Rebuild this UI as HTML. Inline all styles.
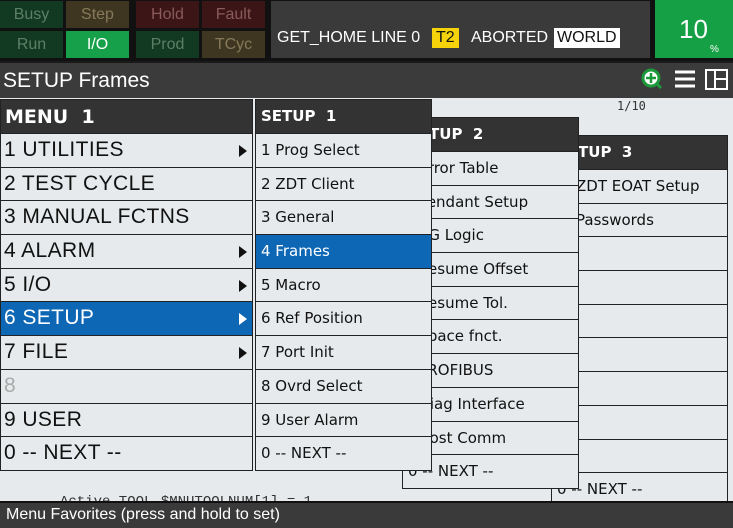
<!DOCTYPE html>
<html><head><meta charset="utf-8"><style>
*{margin:0;padding:0;box-sizing:border-box}
body{width:733px;height:528px;overflow:hidden;background:#e6eaec;position:relative;font-family:"Liberation Sans",sans-serif}
.abs{position:absolute}
.top{left:0;top:0;width:733px;height:61px;background:#111}
.c{position:absolute;width:63px;height:27px;font-size:16px;text-align:center;line-height:27px}
.title{left:0;top:61px;width:733px;height:37px;background:#3b3b3b;border-top:2px solid #1a1a1a;color:#fff;font-size:21px;line-height:36px;padding-left:3px}
.menu{position:absolute;background:#e6eaec}
.menu .h{height:35px;background:#333;color:#fff;font-weight:bold;font-family:"DejaVu Sans",sans-serif;padding-left:5px;border:1px solid #222}
.menu .i{height:33.7px;border:1px solid #222;border-top:none;position:relative;white-space:nowrap;overflow:hidden;color:#111}
.m1 .h{font-size:19px;line-height:35px;padding-left:4px}
.m1 .i{font-size:21px;line-height:32px;padding-left:3px;letter-spacing:0.4px}
.s .h{font-size:15px;line-height:33px}
.s .i{font-family:"DejaVu Sans",sans-serif;font-size:15px;line-height:32px;padding-left:5px}
.s2 .i{padding-left:1px}
.sel{background:#0d67b5;color:#fff!important}
.arr{position:absolute;right:5px;top:11px;width:0;height:0;border-left:8px solid #111;border-top:6px solid transparent;border-bottom:6px solid transparent}
.sel .arr{border-left-color:#fff}
</style></head><body>
<div class="abs top"></div>
<div class="c" style="left:0;top:1px;background:#123a22;color:#5d7f66">Busy</div>
<div class="c" style="left:66px;top:1px;background:#3e3620;color:#86795a">Step</div>
<div class="c" style="left:136px;top:1px;background:#3c1616;color:#8a5a5a">Hold</div>
<div class="c" style="left:202px;top:1px;background:#3c1616;color:#8a5a5a">Fault</div>
<div class="c" style="left:0;top:31px;background:#123a22;color:#5d7f66">Run</div>
<div class="c" style="left:66px;top:31px;background:#16a049;color:#fff">I/O</div>
<div class="c" style="left:136px;top:31px;background:#123a22;color:#5d7f66">Prod</div>
<div class="c" style="left:202px;top:31px;background:#3e3620;color:#86795a">TCyc</div>
<div class="abs" style="left:271px;top:1px;width:379px;height:57px;background:#3a3a3a;color:#fff;font-size:16px">
<span class="abs" style="left:6px;top:28px">GET_HOME LINE 0</span>
<span class="abs" style="left:161px;top:27px;background:#f5d20a;color:#111;padding:1px 4px">T2</span>
<span class="abs" style="left:200px;top:28px">ABORTED</span>
<span class="abs" style="left:283px;top:27px;background:#fff;color:#111;padding:1px 3px">WORLD</span>
</div>
<div class="abs" style="left:655px;top:0;width:78px;height:58px;background:#15a046;color:#fff">
<span class="abs" style="left:24px;top:14px;font-size:26px">10</span>
<span class="abs" style="left:55px;top:44px;font-size:10px">%</span>
</div>
<div class="abs title">SETUP Frames</div>
<svg class="abs" style="left:640px;top:67px" width="92" height="26">
<circle cx="11" cy="11" r="8" fill="#fff" stroke="#1c9a3a" stroke-width="3"/>
<path d="M11 6v10M6 11h10" stroke="#1c9a3a" stroke-width="2.5"/>
<path d="M16 16l5 5" stroke="#1c9a3a" stroke-width="3"/>
<path d="M35 5h20M35 12h20M35 19h20" stroke="#fff" stroke-width="3"/>
<rect x="66" y="3" width="21" height="19" fill="none" stroke="#fff" stroke-width="2"/>
<path d="M75 3v19M75 12h12" stroke="#fff" stroke-width="2"/>
</svg>
<div class="abs" style="left:617px;top:99px;font-family:'DejaVu Sans Mono',monospace;font-size:12px;color:#333">1/10</div>
<div class="abs" style="left:60px;top:494px;font-family:'Liberation Mono',monospace;font-size:14px;color:#333">Active TOOL $MNUTOOLNUM[1] = 1</div>

<div class="menu s" style="left:551px;top:135px;width:177px">
<div class="h">SETUP&nbsp;&nbsp;3</div>
<div class="i" style="padding-left:24px">ZDT EOAT Setup</div><div class="i" style="padding-left:24px">Passwords</div><div class="i"></div><div class="i"></div><div class="i"></div><div class="i"></div><div class="i"></div><div class="i"></div><div class="i"></div><div class="i">0 -- NEXT --</div>
</div>
<div class="menu s s2" style="left:402px;top:117px;width:177px">
<div class="h">SETUP&nbsp;&nbsp;2</div>
<div class="i">1 Error Table</div><div class="i">2 Pendant Setup</div><div class="i">3 BG Logic</div><div class="i">4 Resume Offset</div><div class="i">5 Resume Tol.</div><div class="i">6 Space fnct.</div><div class="i">7 PROFIBUS</div><div class="i">8 Diag Interface</div><div class="i">9 Host Comm</div><div class="i" style="padding-left:5px">0 -- NEXT --</div>
</div>
<div class="menu s" style="left:255px;top:99px;width:177px">
<div class="h">SETUP&nbsp;&nbsp;1</div>
<div class="i">1 Prog Select</div><div class="i">2 ZDT Client</div><div class="i">3 General</div><div class="i sel">4 Frames</div><div class="i">5 Macro</div><div class="i">6 Ref Position</div><div class="i">7 Port Init</div><div class="i">8 Ovrd Select</div><div class="i">9 User Alarm</div><div class="i">0 -- NEXT --</div>
</div>
<div class="menu m1" style="left:0;top:99px;width:253px">
<div class="h">MENU&nbsp;&nbsp;1</div>
<div class="i">1 UTILITIES<span class="arr"></span></div><div class="i">2 TEST CYCLE</div><div class="i">3 MANUAL FCTNS</div><div class="i">4 ALARM<span class="arr"></span></div><div class="i">5 I/O<span class="arr"></span></div><div class="i sel">6 SETUP<span class="arr"></span></div><div class="i">7 FILE<span class="arr"></span></div><div class="i" style="color:#aaa">8</div><div class="i">9 USER</div><div class="i">0 -- NEXT --</div>
</div>
<div class="abs" style="left:0;top:501px;width:733px;height:27px;background:#3a3a3a;border-top:2px solid #111;color:#fff;font-size:16px;line-height:24px;padding-left:6px">Menu Favorites (press and hold to set)</div>
</body></html>
